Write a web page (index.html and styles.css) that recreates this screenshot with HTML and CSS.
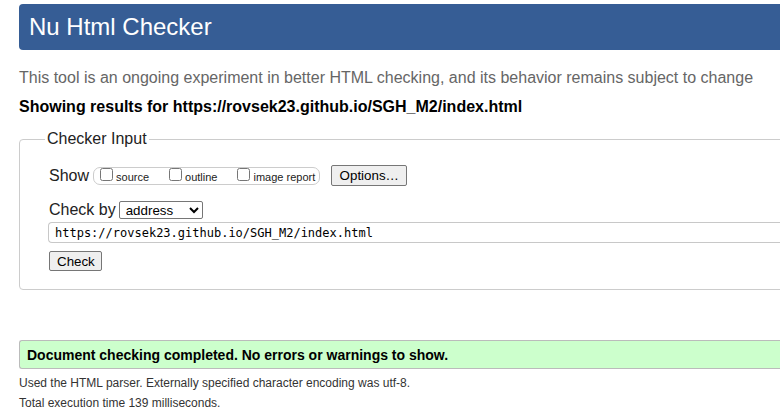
FILE: index.html
```html
<!DOCTYPE html>
<html lang="en">
<head>
<meta charset="utf-8">
<title>Nu Html Checker</title>
<link rel="stylesheet" href="styles.css">
</head>
<body>
<h1 class="title">Nu Html Checker</h1>
<p class="intro">This tool is an ongoing experiment in better HTML checking, and its behavior remains subject to change</p>
<p class="showing">Showing results for https://rovsek23.github.io/SGH_M2/index.html</p>
<form class="form">
  <fieldset class="input-box">
    <legend class="legend">Checker Input</legend>
    <div class="row show-row">
      <span class="row-label">Show</span>
      <div class="options-group">
        <label class="opt"><input type="checkbox" class="cb"><span class="opt-text">source</span></label>
        <label class="opt"><input type="checkbox" class="cb"><span class="opt-text">outline</span></label>
        <label class="opt opt-last"><input type="checkbox" class="cb"><span class="opt-text">image report</span></label>
      </div>
      <button type="button" class="btn btn-options">Options…</button>
    </div>
    <div class="row by-row">
      <span class="row-label">Check by</span>
      <select class="select">
        <option>address</option>
      </select>
    </div>
    <input class="url" type="text" value="https://rovsek23.github.io/SGH_M2/index.html">
    <button type="button" class="btn btn-check">Check</button>
  </fieldset>
</form>
<div class="success">Document checking completed. No errors or warnings to show.</div>
<p class="meta">Used the HTML parser. Externally specified character encoding was utf-8.</p>
<p class="meta">Total execution time 139 milliseconds.</p>
</body>
</html>
```
FILE: styles.css
```css
html, body {
  overflow: hidden;
}
body {
  margin: 0;
  padding: 4px 0 0 19px;
  font-family: "Liberation Sans", Arial, sans-serif;
  color: #000;
  background: #fff;
}
.title {
  margin: 0 -40px 0 0;
  height: 46px;
  line-height: 46px;
  padding-left: 10px;
  font-size: 24px;
  font-weight: normal;
  color: #fff;
  background: #365d95;
  border-radius: 4px;
}
.intro {
  margin: 19px 0 0;
  font-size: 16px;
  line-height: 18px;
  color: #666;
  white-space: nowrap;
}
.showing {
  margin: 11px 0 0;
  font-size: 16px;
  line-height: 18px;
  font-weight: bold;
  color: #000;
}
.form {
  margin: 14px -40px 0 0;
}
.input-box {
  margin: 0;
  padding: 17px 0 18px 29px;
  border: 1px solid #cccccc;
  border-radius: 4px;
  min-width: 0;
}
.legend {
  padding: 0 2px;
  margin-left: -4px;
  font-size: 16px;
  line-height: 18px;
  color: #222;
}
.row {
  display: flex;
  align-items: center;
}
.show-row {
  height: 21px;
}
.row-label {
  font-size: 16px;
  line-height: 18px;
  color: #222;
}
.options-group {
  display: flex;
  align-items: flex-start;
  height: 16px;
  margin-left: 4px;
  padding: 0 4px 0 6px;
  border: 1px solid #cccccc;
  border-radius: 7px;
}
.opt {
  display: flex;
  align-items: flex-start;
  margin-right: 20px;
}
.opt-last {
  margin-right: 0;
}
.cb {
  width: 13px;
  height: 13px;
  margin: 0 3px 0 0;
}
.opt-text {
  font-size: 11px;
  line-height: 18px;
  color: #222;
}
.btn {
  font-family: "Liberation Sans", Arial, sans-serif;
  font-size: 13.333px;
  color: #000;
  background: #efefef;
  border: 1px solid #767676;
  border-radius: 2px;
  padding: 0 7px;
  margin: 0;
}
.btn-options {
  height: 21px;
  margin-left: 11px;
  width: 76px;
}
.by-row {
  margin-top: 15px;
  height: 18px;
}
.select {
  margin-left: 3px;
  width: 84px;
  height: 18px;
  font-family: "Liberation Sans", Arial, sans-serif;
  font-size: 13.333px;
  color: #000;
  background: #fff;
  border: 1px solid #767676;
  border-radius: 2px;
  padding: 0 0 0 2px;
}
.url {
  display: block;
  box-sizing: border-box;
  width: 100%;
  margin: 3px 0 0 -1px;
  height: 21px;
  padding: 0 6px;
  font-family: "DejaVu Sans Mono", "Liberation Mono", monospace;
  font-size: 12px;
  color: #000;
  border: 1px solid #c8c8c8;
  border-right: none;
  border-radius: 4px 0 0 4px;
  outline: none;
}
.btn-check {
  display: block;
  margin-top: 8px;
  height: 20px;
  width: 53px;
}
.success {
  margin: 50px -40px 0 0;
  padding: 2px 0 0 7px;
  height: 25px;
  line-height: 25px;
  font-size: 14px;
  font-weight: bold;
  color: #000;
  background: #ccffcc;
  border: 1px solid #bbbbbb;
  border-right: none;
  border-radius: 3px 0 0 3px;
}
.meta {
  margin: 0;
  font-size: 12px;
  line-height: 20px;
  color: #333;
}
.success + .meta {
  margin-top: 4px;
}
```
